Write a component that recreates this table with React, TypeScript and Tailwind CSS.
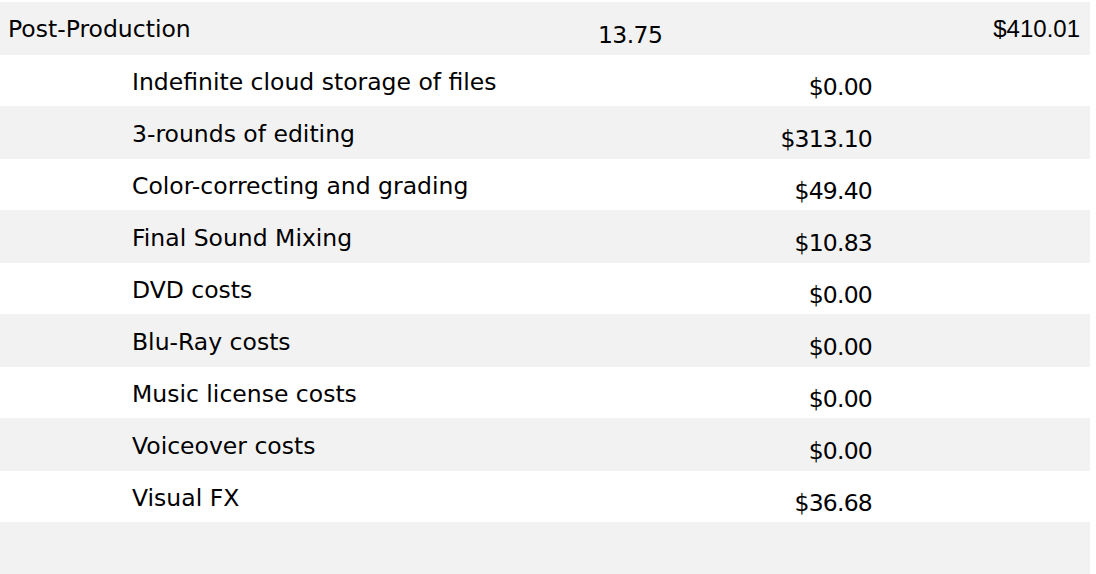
import React from 'react';

const items = [
  { label: 'Indefinite cloud storage of files', amount: '$0.00' },
  { label: '3-rounds of editing', amount: '$313.10' },
  { label: 'Color-correcting and grading', amount: '$49.40' },
  { label: 'Final Sound Mixing', amount: '$10.83' },
  { label: 'DVD costs', amount: '$0.00' },
  { label: 'Blu-Ray costs', amount: '$0.00' },
  { label: 'Music license costs', amount: '$0.00' },
  { label: 'Voiceover costs', amount: '$0.00' },
  { label: 'Visual FX', amount: '$36.68' },
];

const App: React.FC = () => {
  return (
    <div className="w-[1096px] h-[574px] bg-white pt-[2px] overflow-hidden text-black font-['DejaVu_Sans',sans-serif] text-[23.5px]">
      <div className="w-[1090px]">
        {/* section header */}
        <div className="h-[53px] bg-[#f2f2f2] flex items-center">
          <span className="w-[598px] pl-[8px] shrink-0 mt-[3px]">Post-Production</span>
          <span className="mt-[14px] tracking-[-0.6px]">13.75</span>
          <span className="ml-auto pr-[10px] mt-[1px] font-['Liberation_Sans',Arial,sans-serif] text-[24px]">$410.01</span>
        </div>

        {items.map((item, i) => (
          <div
            key={item.label}
            className={`flex items-center ${i % 2 === 0 ? 'h-[51px] bg-white' : 'h-[53px] bg-[#f2f2f2]'}`}
          >
            <span className="w-[600px] pl-[132px] shrink-0 mt-[5px]">{item.label}</span>
            <span className="w-[272px] text-right mt-[15px] tracking-[-0.8px]">{item.amount}</span>
          </div>
        ))}

        <div className="h-[52px] bg-[#f2f2f2]" />
      </div>
    </div>
  );
};

export default App;
